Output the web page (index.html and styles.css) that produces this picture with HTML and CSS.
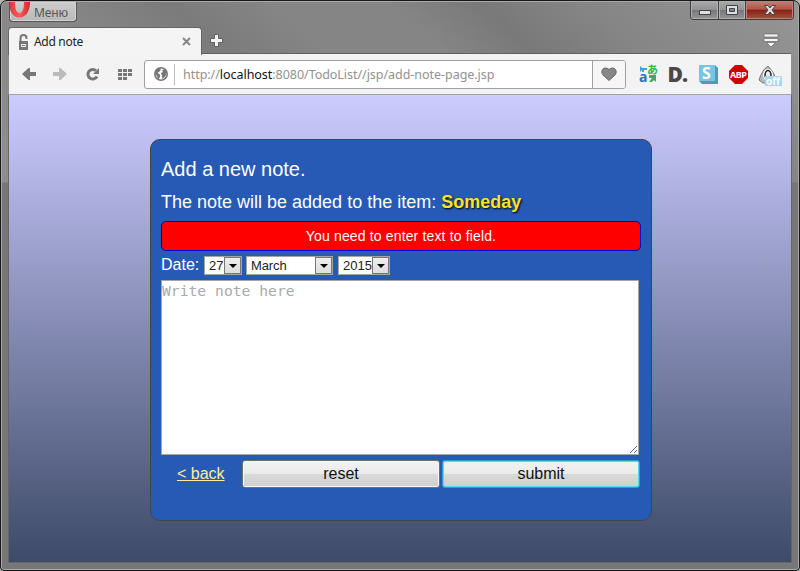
FILE: index.html
```html
<!DOCTYPE html>
<html lang="en">
<head>
<meta charset="utf-8">
<title>Add note</title>
<link rel="stylesheet" href="styles.css">
</head>
<body>
<div class="window">
  <header class="titlebar">
    <div class="menu">
      <svg class="opera" width="22" height="16" viewBox="0 0 22 16"><defs><linearGradient id="red" x1="0" x2="1"><stop offset="0" stop-color="#d23a3c"/><stop offset=".5" stop-color="#ff5a58"/><stop offset="1" stop-color="#c92b30"/></linearGradient></defs><path fill="url(#red)" fill-rule="evenodd" d="M0 0H21C21 9 17 15.500 10.500 15.500C4 15.500 0 9 0 0ZM6 0C6 7 7.500 11 10.500 11C13.500 11 15 7 15 0Z"/></svg>
      <span>Меню</span>
    </div>
    <div class="controls">
      <div class="control"><svg width="27" height="18"><rect x="8.500" y="9.500" width="11" height="4" fill="#ddd" stroke="#3f424c"/></svg></div>
      <div class="control"><svg width="26" height="18"><path fill="#ddd" fill-rule="evenodd" stroke="#3f424c" d="M7.500 4.500h11v9h-11ZM10.500 7.500v3h5v-3Z"/></svg></div>
      <div class="control close"><svg width="47" height="18"><path fill="#ddd" stroke="#50404a" d="M18.500 4.500h3.500l2 2.500l2-2.500h3.500l-3.500 4.500l3.500 4.500h-3.500l-2-2.500l-2 2.500h-3.500l3.500-4.500Z"/></svg></div>
    </div>
  </header>
  <div class="tabs">
    <div class="tab">
      <svg width="9" height="16"><path fill="none" stroke="#777" stroke-width="2" d="M1.500 8V4Q1.500 1 4.500 1Q7.500 1 7.500 4V5"/><path fill="#777" d="M0 7h9v9H0Z"/><rect x="2" y="10" width="5" height="3" rx="1" fill="#f4f4f4"/><path stroke="#777" d="M3 11.500h3"/></svg>
      <span class="tabtitle">Add note</span>
      <svg class="tabclose" width="9" height="9"><path stroke="#868686" stroke-width="2" d="M1 1l7 7M8 1L1 8"/></svg>
    </div>
    <svg class="plus" width="13" height="13"><path fill="#f2f2f2" stroke="#606060" d="M4.500.5h4v4h4v4h-4v4h-4v-4h-4v-4h4Z"/></svg>
    <svg class="tabmenu" width="16" height="15"><path fill="#f4f4f4" stroke="#6a6a6a" stroke-width=".7" d="M1 1h14v3H1ZM1 5.500h14v3H1ZM3.500 9.500h9L8 14Z"/></svg>
  </div>
  <div class="toolbar">
    <svg class="back" width="14" height="12"><path fill="#777" d="M0 6L6.500 0H8V4H14V8H8v4H6.500Z"/></svg>
    <svg class="forward" width="14" height="12"><path fill="#bbb" d="M14 6L7.500 0H6V4H0V8H6v4h1.500Z"/></svg>
    <svg class="reload" width="14" height="14"><path fill="none" stroke="#777" stroke-width="3" d="M11 9.500A4.800 4.800 0 1 1 10 3.700"/><path fill="#777" d="M13 1V7H7Z"/></svg>
    <svg class="dial" width="14" height="11"><path fill="#777" d="M0 0h4v3H0ZM5 0h4v3H5ZM10 0h4v3h-4ZM0 4h4v3H0ZM5 4h4v3H5ZM10 4h4v3h-4ZM0 8h4v3H0ZM5 8h4v3H5Z"/></svg>
    <div class="address">
      <svg class="globe" width="14" height="14"><circle cx="7" cy="7" r="6.200" fill="#f8f8f8" stroke="#777" stroke-width="1.600"/><path fill="#777" d="M1 4L4 1L7 1.500L6 4L3.500 6L6 7.500V10L4 13L3 9L1 7ZM8 3L11 2.500L13 5L11.500 9L8.500 12L8 8.500L7 6L9 5Z"/></svg>
      <div class="url">http://<b>localhost</b>:8080/TodoList//jsp/add-note-page.jsp</div>
      <div class="favorite"><svg width="18" height="16"><path fill="#888" stroke="#666" d="M9 14.500L3 9C-.5 4.500 4.500-.5 9 3.500C13.500-.5 18.500 4.500 15 9Z"/></svg></div>
    </div>
    <svg class="extensions" width="144" height="30" viewBox="0 -3 144 30">
      <path fill="#3ba3d5" d="M1 4l2 2h5v2H5v2H3V8L1 10Z"/>
      <text class="ext-a" x="0" y="20">a</text>
      <text class="ext-kana" x="8" y="12">あ</text>
      <path fill="#48a856" d="M10 13h7v7l-2-2l-2 2h-3l3-4h-3Z"/>
      <text class="ext-d" x="28.500" y="20">D.</text>
      <path fill="#5499b6" d="M60 3h16l3 3v16H63l-3-3Z"/><path fill="#7ac3e3" d="M60 3h16v16H60Z"/>
      <text class="ext-s" x="63" y="16.500">S</text>
      <path fill="#d00000" d="M96 3h7l6 6v7l-6 6h-7l-6-6V9Z"/>
      <text class="ext-abp" x="91" y="15.800">ABP</text>
      <path fill="#b7b9b9" stroke="#777" stroke-width="1" d="M129 4Q134 9 138 18L134 21H124L120 18Q123 8 129 4Z"/>
      <ellipse cx="129" cy="13" rx="5" ry="6" fill="#fff"/><ellipse cx="129" cy="13" rx="3" ry="4.500" fill="#e8e8e8" stroke="#222" stroke-width="1.500"/>
      <path fill="#acd6ec" d="M126 14h17V24h-17Z"/><text class="ext-off" x="127" y="23">off</text>
    </svg>
  </div>
  <main>
    <form class="panel">
      <h1>Add a new note.</h1>
      <h2>The note will be added to the item: <strong>Someday</strong></h2>
      <div class="error">You need to enter text to field.</div>
      <div class="date"><span class="label">Date:</span>
        <div class="select day">27<i></i></div>
        <div class="select month"><span>March</span><i></i></div>
        <div class="select year">2015<i></i></div>
      </div>
      <textarea placeholder="Write note here" spellcheck="false"></textarea>
      <div class="actions"><a href="#">&lt; back</a><button type="reset">reset</button><button class="submit" type="submit">submit</button></div>
    </form>
  </main>
</div>
</body>
</html>
```
FILE: styles.css
```css
* { box-sizing: border-box; }
body { margin: 0; background: #b5b5b5; overflow: hidden; font-family: "Liberation Sans", Arial, sans-serif; }
svg { display: block; flex: none; }
.window {
  width: 800px; height: 571px; border: 1px solid #171717; border-radius: 7px 7px 4px 4px;
  padding: 0 8px 8px; box-shadow: inset 0 0 0 1px #aaa;
  background: linear-gradient(transparent 181px, #777 182px), linear-gradient(40deg, #999 0, #888 48%, #7b7b7b 57%, #858585 64%, #858585 72%, #797979 78%, #858585 85%, #969696 100%);
}
.titlebar { height: 26px; display: flex; justify-content: space-between; align-items: flex-start; }
.menu {
  width: 68px; height: 20px; margin-top: 1px; display: flex; overflow: hidden; border: 1px solid #555; border-top: 0;
  border-radius: 0 0 4px 4px; background: linear-gradient(#ccc, #b9b9b9); box-shadow: inset 0 0 0 1px #d5d5d5;
  font: 12px/22px "Noto Sans", sans-serif; color: #555;
}
.menu span { margin-left: 3px; letter-spacing: -.1px; }
.opera { margin-left: -1px; }
.controls { display: flex; height: 19px; margin-right: -3px; border: 1px solid #3d3d3d; border-top: 0; border-radius: 0 0 4px 4px; overflow: hidden; }
.control { background: linear-gradient(#aaa, #929292 48%, #777 50%, #949494); border-right: 1px solid #444; box-shadow: inset 0 0 0 1px #b0b0b0; }
.close { background: linear-gradient(#c38178, #ac5546 46%, #862113 50%, #a45240); border: 0; box-shadow: inset 0 0 0 1px #bd8077; }
.tabs { height: 27px; display: flex; border-bottom: 1px solid #5f5f5f; }
.tab { width: 194px; height: 28px; margin-left: -1px; margin-bottom: -1px; padding: 0 10px; display: flex; align-items: center; background: #f4f4f4; border: 1px solid #666; border-bottom: 0; border-radius: 4px 4px 0 0; }
.tabtitle { margin-left: 6px; font: 12px/18px "Noto Sans", sans-serif; color: #222; letter-spacing: -.3px; }
.tabclose { margin-left: auto; }
.plus { margin: 7px 0 0 8px; }
.tabmenu { margin: 6px 12px 0 auto; }
.toolbar { height: 41px; display: flex; align-items: center; padding: 0 8px 0 13px; background: #f3f3f3; border-bottom: 1px solid #a2a2a2; }
.forward { margin-left: 17px; }
.reload { margin-left: 19px; }
.dial { margin-left: 18px; }
.address { width: 482px; height: 29px; display: flex; align-items: center; margin-left: 12px; border: 1px solid #a0a0a0; border-radius: 3px; background: #fff; overflow: hidden; }
.globe { margin-left: 9px; }
.url { flex: 1; margin-left: 6px; padding: 1px 0 0 8px; border-left: 1px solid #bbb; font: 12.5px/20px "Noto Sans", sans-serif; letter-spacing: -.04px; color: #929292; white-space: nowrap; }
.url b { font-weight: normal; color: #111; }
.favorite { width: 33px; height: 100%; display: flex; align-items: center; justify-content: center; background: #f6f6f6; border-left: 1px solid #a0a0a0; }
.extensions { margin-left: 13px; overflow: visible; }
.ext-a { font: bold 14px "Noto Sans", sans-serif; fill: #2376ba; }
.ext-kana { font: bold 11px "Noto Sans CJK JP", sans-serif; fill: #3caf4b; }
.ext-d { font: 800 21px "Open Sans", "Noto Sans", sans-serif; fill: #484848; letter-spacing: -1px; }
.ext-s { font: bold 16px "Noto Sans", sans-serif; fill: #fff; }
.ext-abp { font: bold 9px "Noto Sans", sans-serif; fill: #fff; letter-spacing: -.5px; }
.ext-off { font: bold 10px "Noto Sans", sans-serif; fill: #fff; }
main { height: 467px; padding: 44px 0 0 141px; background: linear-gradient(#ccf, #3d4a68); outline: 1px solid #666; clip-path: inset(0 -1px -1px); }
.panel { width: 502px; height: 382px; padding: 17px 10px 0; border: 1px solid #444; border-radius: 10px; background: #265ab5; color: #fff; }
h1 { margin: 0; font-size: 20px; line-height: 25px; font-weight: normal; }
h2 { margin: 9px 0 0; font-size: 18px; line-height: 23px; font-weight: normal; white-space: nowrap; }
strong { color: #ffe22c; text-shadow: 1px 1px 2px #000; }
.error { width: 480px; height: 30px; margin-top: 7px; background: red; border: 1px solid #00c; border-radius: 5px; font-size: 14px; line-height: 29px; letter-spacing: .15px; text-align: center; }
.date { height: 29px; display: flex; align-items: center; }
.label { width: 43px; font-size: 16px; line-height: 20px; margin-top: -1px; }
.select { height: 19px; border: 1px solid #a5a5a5; background: #fff; color: #222; padding-left: 4px; font-size: 13px; line-height: 18px; display: flex; justify-content: space-between; }
.day { width: 38px; }
.month { width: 87px; margin-left: 4px; }
.month span { letter-spacing: -.1px; }
.year { width: 52px; margin-left: 5px; }
.select i { width: 17px; border: 1px solid #777; background: linear-gradient(#eee, #ddd); display: flex; justify-content: center; align-items: center; }
.select i::after { content: ""; border: 4px solid transparent; border-top-color: #000; border-bottom: 0; margin-top: 1px; }
textarea { display: block; width: 478px; height: 175px; margin: 0; padding: 1px 0; border: 1px solid #a5a5a5; background: #fff; resize: both; outline: 0; font: 14.7px/18px "DejaVu Sans Mono", monospace; }
textarea::placeholder { color: #aaa; opacity: 1; }
.actions { display: flex; margin-top: 5px; height: 28px; }
a { width: 81px; padding-left: 16px; color: #ffeb9b; font-size: 16px; line-height: 28px; }
button { width: 198px; height: 28px; padding: 0; font: 16px "Liberation Sans", Arial, sans-serif; color: #111; background: linear-gradient(#f2f2f2, #ebebeb 48%, #dadada 50%, #cfcfcf); border: 1px solid #707070; border-radius: 3px; box-shadow: inset 0 0 0 1px #f6f6f6; }
.submit { margin-left: 2px; border-color: #28a2c9; box-shadow: inset 0 0 0 1px #51daf3; }
```
